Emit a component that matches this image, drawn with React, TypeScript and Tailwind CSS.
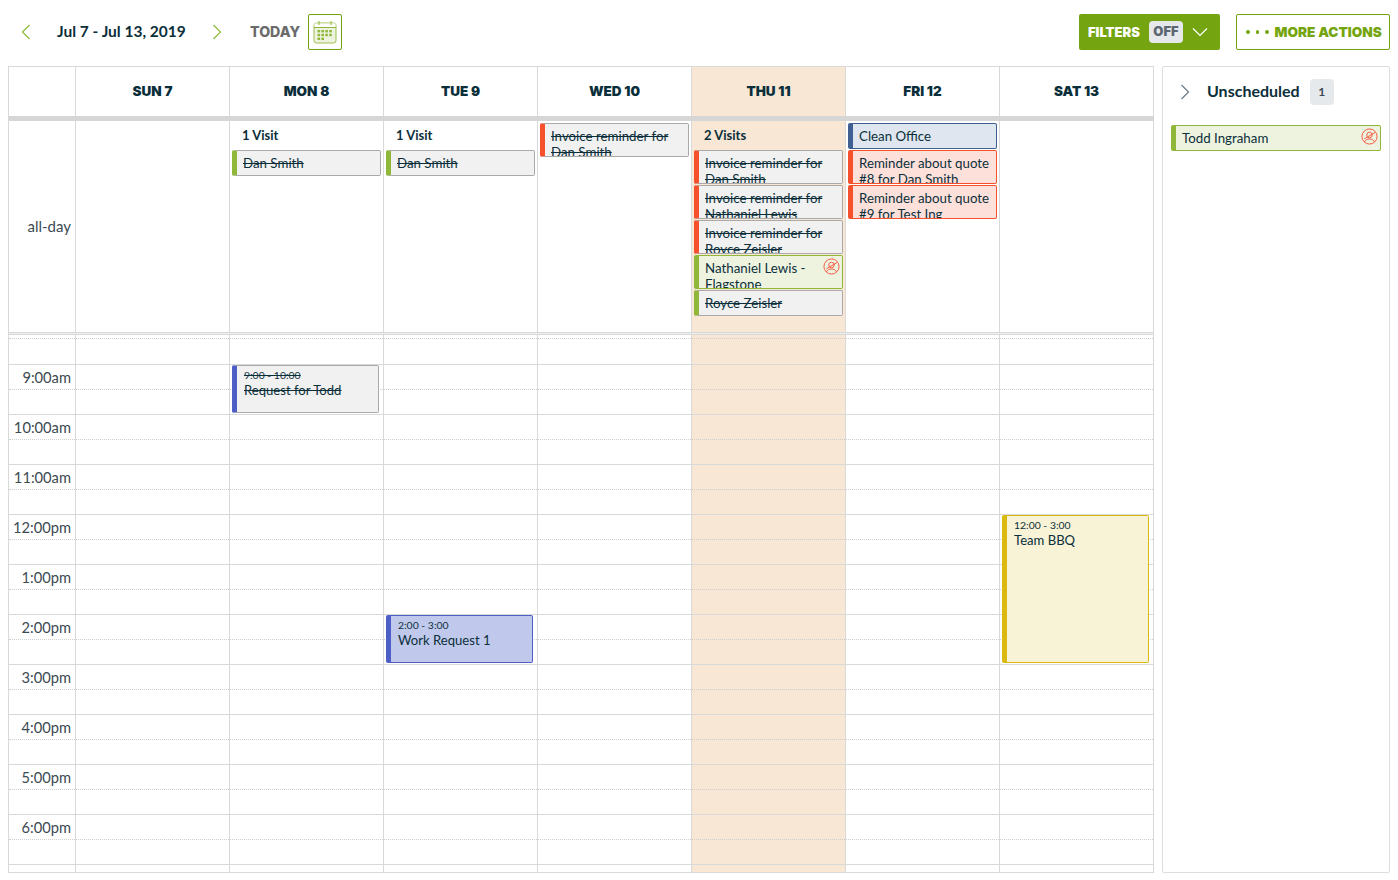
const hours = ['', '9:00am', '10:00am', '11:00am', '12:00pm', '1:00pm', '2:00pm', '3:00pm', '4:00pm', '5:00pm', '6:00pm', ''];

const days = ['SUN 7', 'MON 8', 'TUE 9', 'WED 10', 'THU 11', 'FRI 12', 'SAT 13'];

const heading = "font-['Inter',sans-serif]";

type Tone = 'done-green' | 'done-orange' | 'visit' | 'reminder' | 'task';

const toneClass: Record<Tone, string> = {
  'done-green': 'bg-[#f1f1f1] border-[#a9a9a9] border-l-[#8fb83a] line-through',
  'done-orange': 'bg-[#f1f1f1] border-[#a9a9a9] border-l-[#f4512c] line-through',
  visit: 'bg-[#eef3e0] border-[#8fb83a] border-l-[#8fb83a]',
  reminder: 'bg-[#fde0da] border-[#f4512c] border-l-[#f4512c]',
  task: 'bg-[#dfe6ef] border-[#3f5f92] border-l-[#3f5f92]',
};

const Chevron = ({ dir, color }: { dir: 'left' | 'right' | 'down'; color: string }) => {
  if (dir === 'down') {
    return (
      <svg width="16" height="10" viewBox="0 0 16 10" fill="none" stroke={color} strokeWidth="1.2">
        <path d="M1 1.5l7 7 7-7" />
      </svg>
    );
  }
  return (
    <svg width="10" height="16" viewBox="0 0 10 16" fill="none" stroke={color} strokeWidth="1.2">
      <path d={dir === 'left' ? 'M8.5 1L1.5 8l7 7' : 'M1.5 1l7 7-7 7'} />
    </svg>
  );
};

const CalendarIcon = () => (
  <svg width="24" height="24" viewBox="0 0 24 24" fill="none">
    <rect x="1" y="3" width="22" height="20" rx="2.5" stroke="#9cc04a" strokeWidth="1" fill="#eef3e0" />
    <rect x="1.5" y="3.5" width="21" height="4" fill="#ffffff" />
    <path d="M1 7.5h22M6 1v4M18 1v4" stroke="#8fb83a" strokeWidth="1" />
    {[0, 1, 2].map((r) =>
      [0, 1, 2, 3].map((c) =>
        r === 2 && c > 1 ? null : (
          <rect key={`${r}-${c}`} x={4.5 + c * 3.9} y={10 + r * 3.8} width="2.6" height="2.4" fill="#8fb83a" />
        ),
      ),
    )}
  </svg>
);

const NoUserIcon = () => (
  <svg width="17" height="17" viewBox="0 0 18 18" fill="none" stroke="#f4533a" strokeWidth="1">
    <circle cx="9" cy="9" r="8" />
    <circle cx="9" cy="7.4" r="2.9" />
    <path d="M3.6 14.8c1.2-2.4 3.2-3.2 5.4-3.2s4.2 .8 5.4 3.2" />
    <path d="M3.5 11.5L14.8 4.8" />
  </svg>
);

const AllDayEvent = ({ tone, text, height, icon }: { tone: Tone; text: string; height: string; icon?: boolean }) => (
  <div className={`relative overflow-hidden rounded-[2px] border border-l-[5px] pl-[6px] pt-[4px] text-[13.3px] leading-[16px] text-[#0b2f3a] ${toneClass[tone]} ${height}`}>
    {text}
    {icon && (
      <span className="absolute right-[2px] top-[2px]">
        <NoUserIcon />
      </span>
    )}
  </div>
);

const VisitCount = ({ text }: { text: string }) => (
  <div className="h-[27px] pl-[10px] pt-[3px] text-[13px] font-bold leading-[18px] text-[#0b2f3a]">{text}</div>
);

const TimedEvent = ({ time, title, className }: { time: string; title: string; className: string }) => (
  <div className={`absolute left-[2px] w-[147px] rounded-[2px] border border-l-[5px] pl-[7px] pt-[2px] text-[#0b2f3a] ${className}`}>
    <div className="text-[10.4px] leading-[14px]">{time}</div>
    <div className="text-[13.1px] leading-[17px]">{title}</div>
  </div>
);

const HourCell = ({ idx }: { idx: number }) => (
  <div className={`h-[50px] ${idx > 0 ? 'border-t border-[#d9d9d9]' : ''}`}>
    <div className="h-[25px] border-b border-dotted border-[#cfcfcf]" />
  </div>
);

const App = () => {
  return (
    <div className="h-[880px] w-[1398px] overflow-hidden bg-white font-['Lato',sans-serif] text-[#0b2f3a]">
      {/* toolbar */}
      <div className="flex h-[66px] items-center pb-[2px] pl-[21px] pr-[8px]">
        <button className="flex w-[36px]">
          <Chevron dir="left" color="#8fb83a" />
        </button>
        <div className="w-[155px] text-[15.5px] font-bold">Jul 7 - Jul 13, 2019</div>
        <button className="flex w-[38px]">
          <Chevron dir="right" color="#8fb83a" />
        </button>
        <div className={`w-[58px] text-[14.2px] font-extrabold text-[#6b6b6b] ${heading}`}>TODAY</div>
        <button className="flex h-[36px] w-[34px] items-center justify-center rounded-[2px] border border-[#74a510]">
          <CalendarIcon />
        </button>
        <div className="ml-auto flex items-center gap-[16px]">
          <button className={`flex h-[36px] w-[141px] items-center rounded-[2px] bg-[#74a510] pl-[9px] text-[13px] font-black text-white ${heading}`}>
            <span className="w-[61px] pt-[1px] text-left">FILTERS</span>
            <span className="flex h-[22px] w-[34px] items-center justify-center rounded-[4px] bg-[#e6e9ec] text-[#5c6770]">OFF</span>
            <span className="ml-[9px] flex">
              <Chevron dir="down" color="#ffffff" />
            </span>
          </button>
          <button className={`flex h-[36px] w-[154px] items-center rounded-[2px] border border-[#74a510] pl-[9px] text-[13.6px] font-black text-[#74a510] ${heading}`}>
            <span className="mr-[6px] flex gap-[6px]">
              <i className="h-[3.5px] w-[3.5px] rounded-full bg-[#74a510]" />
              <i className="h-[3.5px] w-[3.5px] rounded-full bg-[#74a510]" />
              <i className="h-[3.5px] w-[3.5px] rounded-full bg-[#74a510]" />
            </span>
            MORE ACTIONS
          </button>
        </div>
      </div>

      <div className="flex pl-[8px]">
        {/* calendar */}
        <div className="h-[807px] w-[1146px] overflow-hidden border-b border-l border-t border-[#d9d9d9]">
          <div className="grid h-[49px] grid-cols-[67px_repeat(7,154px)]">
            <div className="border-r border-[#d9d9d9]" />
            {days.map((d) => (
              <div
                key={d}
                className={`flex items-center justify-center border-r border-[#d9d9d9] text-[13.5px] font-black ${heading} ${d === 'THU 11' ? 'bg-[#f9e7d5]' : ''}`}
              >
                {d}
              </div>
            ))}
          </div>
          <div className="h-[5px] bg-[#d6d6d6]" />

          {/* all-day row */}
          <div className="grid h-[211px] grid-cols-[67px_repeat(7,154px)]">
            <div className="flex items-center justify-end border-r border-[#d9d9d9] pr-[4px] text-[15px] text-[#3c4a52]">all-day</div>
            <div className="border-r border-[#d9d9d9]" />
            <div className="flex flex-col border-r border-[#d9d9d9] px-[2px] pt-[2px]">
              <VisitCount text="1 Visit" />
              <AllDayEvent tone="done-green" text="Dan Smith" height="h-[26px]" />
            </div>
            <div className="flex flex-col border-r border-[#d9d9d9] px-[2px] pt-[2px]">
              <VisitCount text="1 Visit" />
              <AllDayEvent tone="done-green" text="Dan Smith" height="h-[26px]" />
            </div>
            <div className="flex flex-col border-r border-[#d9d9d9] px-[2px] pt-[2px]">
              <AllDayEvent tone="done-orange" text="Invoice reminder for Dan Smith" height="h-[34px]" />
            </div>
            <div className="flex flex-col gap-[1px] border-r border-[#d9d9d9] bg-[#f9e7d5] px-[2px] pt-[2px]">
              <div className="-mb-[1px]">
                <VisitCount text="2 Visits" />
              </div>
              <AllDayEvent tone="done-orange" text="Invoice reminder for Dan Smith" height="h-[34px]" />
              <AllDayEvent tone="done-orange" text="Invoice reminder for Nathaniel Lewis" height="h-[34px]" />
              <AllDayEvent tone="done-orange" text="Invoice reminder for Royce Zeisler" height="h-[34px]" />
              <AllDayEvent tone="visit" text="Nathaniel Lewis - Flagstone" height="h-[34px]" icon />
              <AllDayEvent tone="done-green" text="Royce Zeisler" height="h-[26px]" />
            </div>
            <div className="flex flex-col gap-[1px] border-r border-[#d9d9d9] px-[2px] pt-[2px]">
              <AllDayEvent tone="task" text="Clean Office" height="h-[26px]" />
              <AllDayEvent tone="reminder" text="Reminder about quote #8 for Dan Smith" height="h-[34px]" />
              <AllDayEvent tone="reminder" text="Reminder about quote #9 for Test Ing" height="h-[34px]" />
            </div>
            <div className="border-r border-[#d9d9d9]" />
          </div>
          <div className="h-[3px] border-y border-[#d9d9d9] bg-[#eeeeee]" />

          {/* time grid, first hour is scrolled partly out of view */}
          <div className="h-[537px] overflow-hidden">
            <div className="-mt-[21px] grid grid-cols-[67px_repeat(7,154px)]">
              <div className="border-r border-[#d9d9d9]">
                {hours.map((h, i) => (
                  <div key={i} className={`relative h-[50px] ${i > 0 ? 'border-t border-[#d9d9d9]' : ''}`}>
                    <div className="h-[25px] border-b border-dotted border-[#cfcfcf]" />
                    <span className="absolute right-[4px] top-[2px] text-[14.7px] leading-[20px] text-[#3c4a52]">{h}</span>
                  </div>
                ))}
              </div>
              {days.map((d, col) => (
                <div key={d} className={`relative border-r border-[#d9d9d9] ${col === 4 ? 'bg-[#f9e7d5]' : ''}`}>
                  {hours.map((_, i) => (
                    <HourCell key={i} idx={i} />
                  ))}
                  {col === 1 && (
                    <TimedEvent
                      time="9:00 - 10:00"
                      title="Request for Todd"
                      className="top-[51px] h-[48px] border-[#a9a9a9] border-l-[#4d5fc7] bg-[#f1f1f1] line-through"
                    />
                  )}
                  {col === 2 && (
                    <TimedEvent
                      time="2:00 - 3:00"
                      title="Work Request 1"
                      className="top-[301px] h-[48px] border-[#4d5fc7] bg-[#c0c8ec]"
                    />
                  )}
                  {col === 6 && (
                    <TimedEvent
                      time="12:00 - 3:00"
                      title="Team BBQ"
                      className="top-[201px] h-[148px] border-[#dcb90f] bg-[#f8f2d6]"
                    />
                  )}
                </div>
              ))}
            </div>
          </div>
        </div>

        {/* unscheduled panel */}
        <div className="ml-[8px] h-[807px] w-[228px] rounded-[2px] border border-[#dedede] px-[8px]">
          <div className="flex h-[50px] items-center pl-[9px]">
            <span className="flex w-[27px]">
              <Chevron dir="right" color="#6b7a86" />
            </span>
            <span className="pb-[2px] text-[16px] font-bold">Unscheduled</span>
            <span className="ml-[10px] flex h-[26px] w-[24px] items-center justify-center rounded-[4px] bg-[#e6e9ec] text-[12px] font-bold text-[#3c4a52]">1</span>
          </div>
          <div className="mt-[8px] w-[210px]">
            <AllDayEvent tone="visit" text="Todd Ingraham" height="h-[26px]" icon />
          </div>
        </div>
      </div>
    </div>
  );
};

export default App;
